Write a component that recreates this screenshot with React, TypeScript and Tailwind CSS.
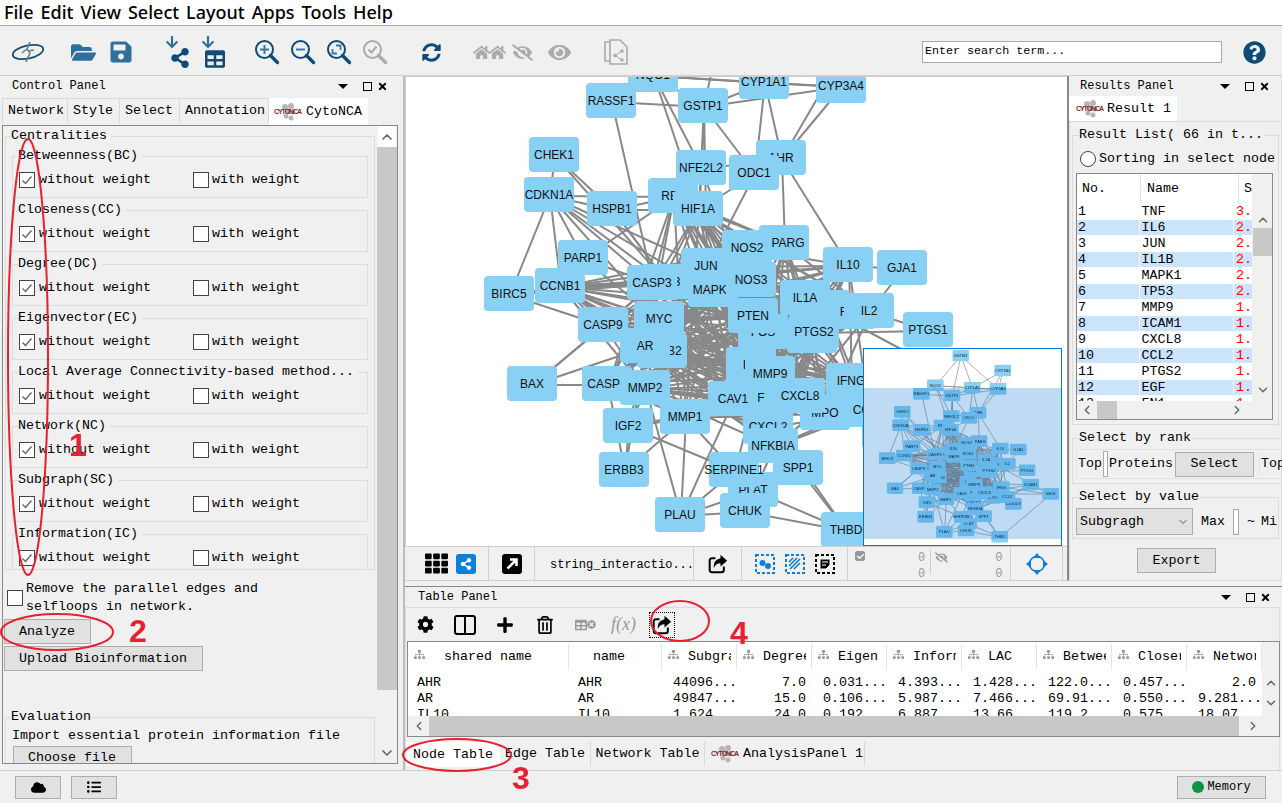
import { FaCloud, FaCog, FaEye, FaEyeSlash, FaFolderOpen, FaHome, FaListUl, FaPlus, FaQuestionCircle, FaSave, FaShareAlt, FaSitemap, FaSyncAlt, FaTh, FaTable, FaRegTrashAlt, FaArrowDown, FaTimes, FaTimesCircle, FaCheck } from "react-icons/fa";
import { ChevronUp, ChevronDown, ChevronLeft, ChevronRight } from "lucide-react";
import type { ReactNode } from "react";

// page coordinates of every node, later entries paint over earlier ones
const nodes: [string, number, number][] = [
  ["GSTM1", 729, -14], ["CYP1B1", 855, 31],
  ["NQO1", 653, 75], ["CYP1A1", 764, 82], ["CYP3A4", 841, 86], ["RASSF1", 611, 101], ["GSTP1", 703, 106],
  ["CHEK1", 554, 155], ["AHR", 781, 158], ["NFE2L2", 701, 168], ["ODC1", 754, 173], ["CDKN1A", 549, 195],
  ["RB1", 673, 196], ["HSPB1", 612, 209], ["HIF1A", 698, 209], ["PARP1", 583, 258], ["PPARG", 784, 243],
  ["NOS2", 747, 248], ["IL10", 848, 265], ["GJA1", 902, 268], ["CCNB1", 560, 286], ["BIRC5", 509, 294],
  ["TP53", 666, 282], ["CASP3", 652, 283], ["MAPK1", 713, 290], ["JUN", 706, 266], ["NOS3", 751, 280],
  ["ICAM1", 825, 308], ["IL1A", 805, 298], ["FN1", 851, 312], ["IL2", 869, 311], ["PTGS1", 928, 330],
  ["VEGFA", 812, 336], ["FOS", 763, 332], ["PTEN", 753, 316], ["PTGS2", 814, 332], ["ERBB2", 662, 351], ["MYC", 659, 319],
  ["CASP9", 603, 325], ["AR", 645, 346], ["IL1B", 751, 372], ["IL6", 751, 365], ["SELE", 999, 401], ["VCAM1", 939, 373],
  ["CD40LG", 887, 431], ["MMP9", 770, 374], ["IFNG", 851, 381], ["BAX", 532, 384],
  ["CASP8", 607, 384], ["IGF2", 628, 426], ["MMP2", 645, 388], ["CXCL2", 768, 427], ["TNF", 753, 398], ["CAV1", 733, 399],
  ["CCL2", 868, 410], ["MPO", 825, 413], ["CXCL8", 800, 396], ["MMP1", 685, 417],
  ["NFKBIA", 773, 446], ["ERBB3", 624, 470], ["PLAT", 753, 490], ["SERPINE1", 734, 470], ["SPP1", 798, 468],
  ["CHUK", 745, 511], ["PLAU", 680, 515], ["THBD", 846, 530],
];

const core = ["CASP3", "TP53", "MAPK1", "JUN", "NOS3", "PTEN", "IL1A", "ICAM1", "IL2", "MYC", "AR", "ERBB2", "FOS", "PTGS2", "IL6", "IL1B", "MMP9", "MMP2", "CAV1", "TNF", "CXCL8", "IFNG", "MPO", "CCL2", "MMP1", "CXCL2", "HIF1A", "NOS2", "PPARG", "IL10", "RB1", "CCNB1", "CASP8", "CASP9", "VEGFA", "NFKBIA"];

const extraEdges = "GSTM1-GSTP1 GSTM1-CYP1A1 GSTM1-NQO1 GSTM1-CYP3A4 CYP1B1-CYP1A1 CYP1B1-CYP3A4 CYP1B1-AHR NQO1-CYP1A1 NQO1-CYP3A4 NQO1-GSTP1 NQO1-RASSF1 NQO1-NFE2L2 NQO1-HIF1A CYP1A1-CYP3A4 CYP1A1-GSTP1 CYP1A1-AHR CYP1A1-ODC1 CYP3A4-GSTP1 CYP3A4-AHR RASSF1-GSTP1 RASSF1-CASP3 GSTP1-NFE2L2 GSTP1-ODC1 GSTP1-HIF1A GSTP1-JUN CHEK1-CDKN1A CHEK1-HSPB1 CHEK1-TP53 AHR-PPARG AHR-IL10 AHR-NFE2L2 NFE2L2-HIF1A NFE2L2-PTEN ODC1-HIF1A ODC1-JUN CDKN1A-HSPB1 CDKN1A-RB1 CDKN1A-BIRC5 CDKN1A-CASP3 CDKN1A-TP53 CDKN1A-MYC CDKN1A-PTEN CDKN1A-CCNB1 CDKN1A-PARP1 CDKN1A-JUN HSPB1-RB1 HSPB1-HIF1A HSPB1-TP53 HSPB1-TNF PARP1-CASP3 PARP1-RB1 PARP1-TNF BIRC5-CCNB1 BIRC5-CASP3 BIRC5-CASP9 CCNB1-CASP3 CASP9-BAX CASP9-CASP3 BAX-CASP8 BAX-AR BAX-CASP3 GJA1-IL10 GJA1-IL2 PTGS1-PTGS2 PTGS1-IL2 IGF2-MMP2 IGF2-ERBB3 IGF2-MMP1 IGF2-AR IGF2-TNF ERBB3-MMP1 ERBB3-AR ERBB3-CASP8 PLAU-MMP1 PLAU-SERPINE1 PLAU-CAV1 PLAU-PLAT PLAU-MMP2 PLAU-CHUK CHUK-NFKBIA CHUK-THBD SPP1-THBD SPP1-MMP9 SPP1-IL6 PLAT-THBD PLAT-SERPINE1 SERPINE1-MMP1 SERPINE1-IGF2 SERPINE1-TNF SERPINE1-NFKBIA NFKBIA-IFNG NFKBIA-VCAM1 SELE-VCAM1 SELE-ICAM1 SELE-THBD SELE-IL6 SELE-TNF VCAM1-IL6 VCAM1-TNF VCAM1-CCL2 CD40LG-IL6 CD40LG-TNF THBD-TNF"
  .split(" ")
  .map((e) => e.split("-"));

const pos = Object.fromEntries(nodes.map(([n, x, y]) => [n, [x - 405, y - 76]]));
const pairs: string[][] = [...extraEdges];
core.forEach((a, i) =>
  core.forEach((b, j) => {
    if (j > i && (i + j) % 2 === 0) pairs.push([a, b]);
  }),
);

function Network() {
  return (
    <div className="absolute left-0 top-0 h-[470px] w-[662px]">
      <svg width={662} height={470} className="absolute left-0 top-0 overflow-visible">
        {pairs.map(([a, b], i) => (
          <line key={i} x1={pos[a][0]} y1={pos[a][1]} x2={pos[b][0]} y2={pos[b][1]} stroke="#888888" strokeWidth={a === "CCNB1" && b === "CASP3" ? 5 : 2} />
        ))}
      </svg>
      {nodes.map(([name, x, y]) => (
        <div
          key={name}
          className="absolute flex h-[35px] w-[50px] items-center justify-center whitespace-nowrap rounded-[4px] bg-[#89d0f5] font-['Liberation_Sans',sans-serif] text-[12px] text-[#111]"
          style={{ left: x - 405 - 26, top: y - 76 - 19 }}
        >
          {name}
        </div>
      ))}
    </div>
  );
}

function Caret() {
  return <span className="h-0 w-0 border-x-[5px] border-t-[5px] border-x-transparent border-t-black" />;
}

function PanelHeader({ title, className }: { title: string; className: string }) {
  return (
    <div className={"flex h-[20px] shrink-0 items-center " + className}>
      <span className="flex-1 text-[12px]">{title}</span>
      <Caret />
      <span className="ml-[15px] h-[9px] w-[9px] border border-black" />
      <FaTimes className="ml-[5px] text-[11px]" />
    </div>
  );
}

function NcaLogo({ w = 28 }: { w?: number }) {
  return (
    <svg width={w} height={20} viewBox="0 0 28 20" className="shrink-0">
      <g fill="#b9b4b4">
        <circle cx="11" cy="5" r="3" /><circle cx="17" cy="4" r="3" /><circle cx="14" cy="9" r="3" /><circle cx="19" cy="10" r="2.5" />
        <circle cx="12" cy="14" r="2.5" /><circle cx="17" cy="16" r="2.5" />
      </g>
      <text x="0" y="12" fontSize="7" fontWeight="700" fill="#7c2a2a" fontFamily="Liberation Sans" textLength="28">CYTONCA</text>
    </svg>
  );
}

function Check({ on }: { on?: boolean }) {
  return (
    <span className="flex h-[16px] w-[16px] shrink-0 items-center justify-center border border-[#444] bg-white">
      {on && (
        <svg width="12" height="12" viewBox="0 0 12 12"><path d="M1.5 6.5 L4.5 9.5 L10.5 2.5" fill="none" stroke="#666" strokeWidth="1.4" /></svg>
      )}
    </span>
  );
}

function Group({ title, last }: { title: string; last?: boolean }) {
  return (
    <fieldset className={"mx-[6px] h-[50px] shrink-0 border border-[#dcdcdc] pl-[6px] " + (last ? "mb-[-12px]" : "mb-[4px]")}>
      <legend className="ml-[-1px] whitespace-nowrap pr-[4px] leading-[16px]">{title}</legend>
      <div className="mt-[6px] flex items-center">
        <div className="flex w-[174px] items-center gap-[4px]">
          <Check on />
          <span>without weight</span>
        </div>
        <div className="flex items-center gap-[3px]">
          <Check />
          <span>with weight</span>
        </div>
      </div>
    </fieldset>
  );
}

function Btn({ children, className }: { children: ReactNode; className: string }) {
  return <div className={"flex shrink-0 items-center border border-[#adadad] bg-[#e1e1e1] " + className}>{children}</div>;
}

function Magnifier({ kind, color = "#0f4c75" }: { kind: "plus" | "minus" | "fit" | "check"; color?: string }) {
  return (
    <svg width="26" height="26" viewBox="0 0 26 26">
      <circle cx="10.5" cy="10.5" r="8.5" fill="none" stroke={color} strokeWidth="2" />
      <path d="M16.5 16.5 L23.5 23.5" stroke={color} strokeWidth="3.4" strokeLinecap="round" />
      {kind === "plus" && <path d="M6 10.5 H15 M10.5 6 V15" stroke="#3a77a4" strokeWidth="2" />}
      {kind === "minus" && <path d="M6 10.5 H15" stroke="#3a77a4" strokeWidth="2" />}
      {kind === "fit" && <path d="M6.5 10 V14.5 H11 M10 6.5 H14.5 V11" fill="none" stroke="#3a77a4" strokeWidth="1.8" />}
      {kind === "check" && <path d="M6.5 10.5 L9.5 13.5 L14.5 7.5" fill="none" stroke={color} strokeWidth="2" />}
    </svg>
  );
}

function ShareBox({ size = 24 }: { size?: number }) {
  return (
    <svg width={size} height={size} viewBox="0 0 24 24">
      <path d="M9 5 H5 Q2 5 2 8 V19 Q2 22 5 22 H16 Q19 22 19 19 V15" fill="none" stroke="#000" strokeWidth="2.4" />
      <path d="M15 1 L23 8 L15 15 V11 Q9 11 7 17 Q6 7 15 5 Z" fill="#000" />
    </svg>
  );
}

function DashedBox({ color, children }: { color: string; children: ReactNode }) {
  return (
    <svg width="20" height="20" viewBox="0 0 20 20">
      <rect x="1" y="1" width="18" height="18" fill="none" stroke={color} strokeWidth="2" strokeDasharray="3 2" />
      {children}
    </svg>
  );
}

function Toolbar() {
  return (
    <div className="flex h-[50px] shrink-0 items-center border-b border-[#d0d0d0] bg-[#f0f0f0] pl-[11px] pt-[3px] text-[#0f4c75]">
      <svg width="34" height="26" viewBox="0 0 34 26" className="shrink-0">
        <ellipse cx="17" cy="13" rx="15.5" ry="6.5" transform="rotate(-12 17 13)" fill="none" stroke="#1d4f70" strokeWidth="1.8" />
        <path d="M19 3 L16 10 L19 14 L15 23 M16 10 L11 14 M17 12 L23 11" fill="none" stroke="#6a7f8c" strokeWidth="1.6" />
      </svg>
      <FaFolderOpen className="ml-[26px] text-[25px] text-[#2f6f9c]" />
      <FaSave className="ml-[13px] text-[24px] text-[#2f6f9c]" />
      <div className="relative ml-[32px] h-[34px] w-[26px]">
        <FaArrowDown className="absolute left-0 top-0 text-[14px] text-[#2f6f9c]" />
        <FaShareAlt className="absolute left-[5px] top-[13px] text-[20px] text-[#0f4c75]" />
      </div>
      <div className="relative ml-[10px] h-[34px] w-[26px]">
        <FaArrowDown className="absolute left-0 top-0 text-[14px] text-[#2f6f9c]" />
        <FaTable className="absolute left-[4px] top-[14px] text-[20px] text-[#0f4c75]" />
      </div>
      <div className="ml-[27px] flex gap-[10px]">
        <Magnifier kind="plus" />
        <Magnifier kind="minus" />
        <Magnifier kind="fit" />
        <Magnifier kind="check" color="#ababab" />
      </div>
      <FaSyncAlt className="ml-[34px] text-[19px] text-[#0f4c75]" />
      <div className="ml-[32px] flex text-[#ababab]">
        <FaHome className="text-[17px]" />
        <FaHome className="-ml-[1px] text-[17px]" />
      </div>
      <FaEyeSlash className="ml-[6px] text-[21px] text-[#ababab]" />
      <FaEye className="ml-[15px] text-[23px] text-[#ababab]" />
      <svg width="26" height="28" viewBox="0 0 26 28" className="ml-[32px] shrink-0">
        <path d="M2 4 H11 V23 H2 Z" fill="none" stroke="#ababab" strokeWidth="1.6" />
        <path d="M7 2 H17 L24 9 V26 H7 Z" fill="#f0f0f0" stroke="#ababab" strokeWidth="1.6" />
        <circle cx="19" cy="13" r="1.8" fill="#ababab" /><circle cx="19" cy="22" r="1.8" fill="#ababab" /><circle cx="12" cy="17.5" r="1.8" fill="#ababab" />
        <path d="M19 13 L12 17.5 L19 22" fill="none" stroke="#ababab" />
      </svg>
      <div className="ml-[293px] flex h-[22px] w-[300px] shrink-0 items-center border border-[#aaa] bg-white pl-[2px] text-[11.7px] text-black">Enter search term...</div>
      <FaQuestionCircle className="ml-[21px] shrink-0 text-[23px] text-[#0f4c75]" />
    </div>
  );
}

function ControlPanel() {
  const titles = ["Betweenness(BC)", "Closeness(CC)", "Degree(DC)", "Eigenvector(EC)", "Local Average Connectivity-based method...", "Network(NC)", "Subgraph(SC)", "Information(IC)"];
  return (
    <div className="flex w-[405px] shrink-0 flex-col border-r-2 border-[#bdbdbd]">
      <PanelHeader title="Control Panel" className="pl-[12px] pr-[15px]" />
      <div className="flex h-[29px] shrink-0 items-start pl-[2px] pt-[2px]">
        <div className="flex h-[25px] w-[66px] items-center border border-b-0 border-[#d9d9d9] pl-[5px]">Network</div>
        <div className="flex h-[25px] w-[52px] items-center border border-l-0 border-b-0 border-[#d9d9d9] pl-[5px]">Style</div>
        <div className="flex h-[25px] w-[60px] items-center border border-l-0 border-b-0 border-[#d9d9d9] pl-[5px]">Select</div>
        <div className="flex h-[25px] w-[89px] items-center border border-l-0 border-b-0 border-[#d9d9d9] pl-[5px]">Annotation</div>
        <div className="flex h-[27px] w-[99px] items-center gap-[4px] bg-white pl-[5px]">
          <NcaLogo />
          CytoNCA
        </div>
      </div>
      <div className="ml-[2px] flex h-[639px] w-[396px] border border-[#888]">
        <div className="flex w-[374px] shrink-0 flex-col overflow-hidden">
          <fieldset className="mx-[2px] mt-[2px] h-[442px] shrink-0 overflow-hidden border border-[#dcdcdc]">
            <legend className="ml-[5px] pr-[4px] leading-[16px]">Centralities</legend>
            <div className="mt-[4px] flex flex-col">
              {titles.map((t, i) => (
                <Group key={t} title={t} last={i === titles.length - 1} />
              ))}
            </div>
          </fieldset>
          <div className="ml-[4px] mt-[10px] flex items-center gap-[3px]">
            <Check />
            <span className="leading-[18px]">Remove the parallel edges and<br />selfloops in network.</span>
          </div>
          <Btn className="ml-[1px] mt-[3px] h-[25px] w-[87px] pl-[14px]">Analyze</Btn>
          <Btn className="ml-[1px] mt-[2px] h-[25px] w-[199px] pl-[14px]">Upload Bioinformation</Btn>
          <fieldset className="mx-[2px] mt-[38px] h-[90px] shrink-0 border border-[#dcdcdc]">
            <legend className="ml-[5px] pr-[1px] leading-[16px]">Evaluation</legend>
            <div className="ml-[6px] mt-[3px] whitespace-nowrap leading-[16px]">Import essential protein information file</div>
            <Btn className="ml-[7px] mt-[2px] h-[24px] w-[119px] pl-[14px]">Choose file</Btn>
          </fieldset>
        </div>
        <div className="flex w-[20px] shrink-0 flex-col items-center text-[#666]">
          <div className="flex h-[21px] items-center bg-white px-[1px]"><ChevronUp size={16} strokeWidth={2.5} /></div>
          <div className="h-[543px] w-full bg-[#c8c8c8]" />
          <div className="flex flex-1 items-end pb-[2px]"><ChevronDown size={16} strokeWidth={2.5} /></div>
        </div>
      </div>
    </div>
  );
}

function ResultsPanel() {
  const rows = [["1", "TNF", "3."], ["2", "IL6", "2."], ["3", "JUN", "2."], ["4", "IL1B", "2."], ["5", "MAPK1", "2."], ["6", "TP53", "2."], ["7", "MMP9", "1."], ["8", "ICAM1", "1."], ["9", "CXCL8", "1."], ["10", "CCL2", "1."], ["11", "PTGS2", "1."], ["12", "EGF", "1."], ["13", "FN1", "1."]];
  return (
    <div className="flex h-[505px] w-[215px] shrink-0 flex-col border-l-2 border-r border-b border-[#888] border-r-[#dcdcdc] border-b-[#dcdcdc]">
      <PanelHeader title="Results Panel" className="pl-[11px] pr-[11px]" />
      <div className="flex h-[25px] w-[108px] shrink-0 items-center gap-[3px] bg-white pl-[7px]">
        <NcaLogo />
        Result 1
      </div>
      <div className="flex flex-1 flex-col border-l border-t border-[#dcdcdc] pl-[2px] pr-[2px]">
        <fieldset className="mt-[5px] h-[298px] shrink-0 overflow-hidden border border-[#dcdcdc] pl-[3px] pr-[3px]">
          <legend className="ml-[3px] whitespace-nowrap pr-[2px] leading-[16px]">Result List( 66 in t...</legend>
          <div className="mt-[4px] flex h-[24px] items-center gap-[3px] overflow-hidden whitespace-nowrap">
            <span className="ml-[4px] h-[16px] w-[16px] shrink-0 rounded-full border border-[#444] bg-white" />
            Sorting in select node
          </div>
          <div className="mt-[2px] h-[247px] w-[197px] border border-[#888]">
            <div className="flex h-[227px]">
              <div className="w-[175px] overflow-hidden bg-white">
                <div className="flex h-[29px] items-center">
                  <span className="w-[64px] border-r border-[#e5e5e5] pl-[5px] leading-[29px]">No.</span>
                  <span className="w-[98px] border-r border-[#e5e5e5] pl-[6px] leading-[29px]">Name</span>
                  <span className="pl-[5px]">S</span>
                </div>
                {rows.map((r, i) => (
                  <div key={r[0]} className="flex h-[16px] items-center gap-[1px] leading-[16px]">
                    <span className={"h-[15px] w-[64px] pl-[1px] " + (i % 2 ? "bg-[#cce4fb]" : "")}>{r[0]}</span>
                    <span className={"h-[15px] w-[97px] pl-[2px] " + (i % 2 ? "bg-[#cce4fb]" : "")}>{r[1]}</span>
                    <span className={"h-[15px] flex-1 pl-[2px] text-[#ff0000] " + (i % 2 ? "bg-[#cce4fb]" : "")}>{r[2]}</span>
                  </div>
                ))}
              </div>
              <div className="flex flex-1 flex-col items-center pl-[1px] pt-[39px] text-[#666]">
                <ChevronUp size={14} strokeWidth={2.5} />
                <div className="mt-[1px] h-[28px] w-[19px] bg-[#c8c8c8]" />
                <div className="mt-[127px]"><ChevronDown size={14} strokeWidth={2.5} /></div>
              </div>
            </div>
            <div className="flex h-[18px] w-[175px] items-center pl-[3px] text-[#666]">
              <ChevronLeft size={14} strokeWidth={2.5} />
              <div className="ml-[3px] h-[18px] w-[20px] bg-[#c8c8c8]" />
              <div className="ml-[113px]"><ChevronRight size={14} strokeWidth={2.5} /></div>
            </div>
          </div>
        </fieldset>
        <fieldset className="mt-[5px] h-[54px] shrink-0 overflow-hidden border border-[#dcdcdc] pl-[3px]">
          <legend className="ml-[3px] pr-[2px] leading-[16px]">Select by rank</legend>
          <div className="mt-[3px] flex h-[30px] items-center whitespace-nowrap border border-[#e2e2e2]">
            <span className="pl-[1px]">Top</span>
            <span className="mx-[1px] h-[26px] w-[5px] shrink-0 border border-[#aaa] bg-white" />
            <span>Proteins</span>
            <Btn className="ml-[2px] h-[25px] w-[79px] justify-center">Select</Btn>
            <span className="ml-[5px] border-l border-[#e2e2e2] pl-[1px]">Top</span>
          </div>
        </fieldset>
        <fieldset className="mt-[5px] h-[50px] shrink-0 overflow-hidden border border-[#dcdcdc] pl-[3px]">
          <legend className="ml-[3px] pr-[2px] leading-[16px]">Select by value</legend>
          <div className="mt-[3px] flex h-[27px] items-center whitespace-nowrap">
            <div className="flex h-[27px] w-[117px] shrink-0 items-center justify-between border border-[#adadad] bg-[#e1e1e1] pl-[3px] pr-[3px]">
              Subgragh
              <ChevronDown size={12} className="text-[#555]" />
            </div>
            <span className="ml-[8px]">Max</span>
            <span className="ml-[8px] h-[26px] w-[6px] shrink-0 border border-[#aaa] bg-white" />
            <span className="ml-[8px]">~</span>
            <span className="ml-[6px]">Mi</span>
          </div>
        </fieldset>
        <Btn className="ml-[65px] mt-[9px] h-[25px] w-[79px] justify-center">Export</Btn>
      </div>
    </div>
  );
}

function NetworkView() {
  return (
    <div className="flex h-[506px] w-[662px] shrink-0 flex-col">
      <div className="relative h-[470px] shrink-0 overflow-hidden border-l border-t border-[#ccc] bg-white">
        <Network />
        <div className="absolute bottom-[0px] right-[5px] h-[198px] w-[199px] overflow-hidden border border-[#0078d7] bg-white">
          <div className="absolute left-[-11px] top-[37px] origin-top-left scale-[0.3333]">
            <Network />
          </div>
          <div className="absolute bottom-[6px] left-0 right-0 top-[39px] bg-[rgba(0,110,210,0.25)]" />
        </div>
      </div>
      <div className="flex h-[35px] shrink-0 items-center border-t border-b border-[#d0d0d0] text-[12px]">
        <div className="flex h-full w-[84px] items-center border-r border-[#d0d0d0] pl-[20px]">
          <FaTh className="text-[23px]" />
          <span className="ml-[8px] flex h-[20px] w-[20px] items-center justify-center rounded-[3px] bg-[#0b7fdc] text-[12px] text-white"><FaShareAlt /></span>
        </div>
        <div className="flex h-full w-[46px] items-center justify-center border-r border-[#d0d0d0]">
          <svg width="20" height="20" viewBox="0 0 20 20"><rect width="20" height="20" rx="3" fill="#000" /><path d="M5.5 14.5 L13 7 M8 5.5 H14.5 V12" fill="none" stroke="#fff" strokeWidth="2.6" /></svg>
        </div>
        <div className="flex h-full w-[159px] items-center border-r border-[#d0d0d0] pl-[15px] pt-[3px]">string_interactio...</div>
        <div className="flex h-full w-[48px] items-center justify-center border-r border-[#d0d0d0]"><ShareBox size={20} /></div>
        <div className="flex h-full w-[106px] items-center justify-center gap-[10px] border-r border-[#d0d0d0]">
          <DashedBox color="#0b7fdc"><circle cx="7.5" cy="9" r="3" fill="#0b7fdc" /><circle cx="13" cy="12" r="3" fill="#0b7fdc" /></DashedBox>
          <DashedBox color="#0b7fdc"><path d="M4 8 L8 4 M4 12 L12 4 M5 15 L15 5 M9 15 L15 9" stroke="#0b7fdc" strokeWidth="1.6" /></DashedBox>
          <DashedBox color="#000"><path d="M5 5 H15 V11 L11 15 H5 Z M7 8 H13 M7 11 H11" fill="#000" stroke="#fff" strokeWidth="1" /></DashedBox>
        </div>
        <div className="flex h-full w-[163px] border-r border-[#d0d0d0] text-[#999]">
          <span className="ml-[7px] mt-[4px] flex h-[10px] w-[10px] items-center justify-center rounded-[2px] bg-[#999] text-[7px] text-white"><FaCheck /></span>
          <span className="ml-[53px] mt-[3px] leading-[16px]">0<br />0</span>
          <span className="ml-[5px] mt-[3px] h-[24px] border-l border-[#ccc]" />
          <FaEyeSlash className="ml-[4px] mt-[4px] text-[13px]" />
          <span className="ml-[47px] mt-[3px] leading-[16px]">0<br />0</span>
        </div>
        <div className="flex h-full w-[52px] items-center justify-center border-r border-[#d0d0d0]">
          <svg width="22" height="22" viewBox="0 0 22 22" fill="#0b7fdc">
            <circle cx="11" cy="11" r="7.5" fill="none" stroke="#0b7fdc" strokeWidth="1.6" />
            <path d="M11 0 L15 5 H7 Z M11 22 L7 17 H15 Z M0 11 L5 7 V15 Z M22 11 L17 15 V7 Z" />
          </svg>
        </div>
      </div>
    </div>
  );
}

function TablePanel() {
  const cols = [["shared name", 161, false], ["name", 93, false], ["Subgra", 75, true], ["Degree", 75, true], ["Eigen", 75, true], ["Inform", 75, true], ["LAC", 75, true], ["Betwee", 75, true], ["Closer", 75, true], ["Networ", 75, true]] as [string, number, boolean][];
  const data = [
    ["AHR", "AHR", "44096...", "7.0", "0.031...", "4.393...", "1.428...", "122.0...", "0.457...", "2.0"],
    ["AR", "AR", "49847...", "15.0", "0.106...", "5.987...", "7.466...", "69.91...", "0.550...", "9.281..."],
    ["IL10", "IL10", "1.624...", "24.0", "0.192...", "6.887...", "13.66...", "119.2...", "0.575...", "18.07..."],
  ];
  return (
    <div className="mt-[4px] flex h-[184px] shrink-0 flex-col border-t border-[#888]">
      <PanelHeader title="Table Panel" className="pl-[13px] pr-[11px]" />
      <div className="mr-[2px] flex flex-1 flex-col border-t border-l border-r border-[#dcdcdc]">
        <div className="flex h-[33px] shrink-0 items-center pl-[11px]">
          <FaCog className="text-[17px]" />
          <svg width="22" height="20" viewBox="0 0 22 20" className="ml-[20px]"><rect x="1" y="1" width="20" height="18" rx="2" fill="none" stroke="#000" strokeWidth="2" /><path d="M11 1 V19" stroke="#000" strokeWidth="2" /></svg>
          <FaPlus className="ml-[20px] text-[18px]" />
          <FaRegTrashAlt className="ml-[22px] text-[18px]" />
          <div className="ml-[21px] flex items-center text-[#999]">
            <FaTable className="text-[12px]" />
            <FaTimesCircle className="text-[9px]" />
          </div>
          <span className="ml-[15px] font-['Liberation_Serif',serif] text-[18px] italic text-[#999]">f(x)</span>
          <div className="ml-[13px] flex h-[26px] w-[26px] items-center justify-center border border-dotted border-black"><ShareBox size={20} /></div>
        </div>
        <div className="ml-[1px] flex h-[96px] w-[873px] shrink-0 flex-col border border-[#888]">
          <div className="flex h-[74px] overflow-hidden">
            <div className="w-[854px] overflow-hidden bg-white">
              <div className="flex h-[33px] items-start pt-[2px]">
                {cols.map(([c, w, trim], i) => (
                  <div key={c} style={{ width: w }} className="flex h-[26px] shrink-0 items-center whitespace-nowrap border-r border-[#e5e5e5] pl-[6px] pr-[5px] leading-[26px]">
                    {i !== 1 && <FaSitemap className="mb-[6px] mr-[9px] shrink-0 text-[11px] text-[#999]" />}
                    <span className={"overflow-hidden " + (trim ? "" : i === 0 ? "ml-[10px]" : "ml-[18px]")}>{c}</span>
                  </div>
                ))}
              </div>
              {data.map((row) => (
                <div key={row[0]} className="flex h-[16px] items-center leading-[16px]">
                  {row.map((v, i) => (
                    <div key={i} style={{ width: cols[i][1] }} className={"shrink-0 whitespace-nowrap " + (i < 2 ? "pl-[9px]" : i === 3 || v === "2.0" ? "pr-[6px] text-right" : "pl-[11px]")}>{v}</div>
                  ))}
                </div>
              ))}
            </div>
            <div className="flex flex-1 flex-col items-center pt-[34px] text-[#666]">
              <ChevronUp size={14} strokeWidth={2.5} />
              <ChevronDown size={14} strokeWidth={2.5} className="mt-[6px]" />
            </div>
          </div>
          <div className="flex h-[20px] flex-1 items-center text-[#666]">
            <div className="flex w-[21px] justify-center"><ChevronLeft size={14} strokeWidth={2.5} /></div>
            <div className="h-full w-[810px] bg-[#c8c8c8]" />
            <div className="flex flex-1 pl-[7px]"><ChevronRight size={14} strokeWidth={2.5} /></div>
          </div>
        </div>
        <div className="mt-[5px] flex h-[25px] items-start">
          <div className="flex h-[25px] w-[94px] items-center justify-center bg-white">Node Table</div>
          <div className="flex h-[24px] w-[91px] items-center justify-center border-r border-[#d9d9d9]">Edge Table</div>
          <div className="flex h-[24px] w-[114px] items-center justify-center border-r border-[#d9d9d9]">Network Table</div>
          <div className="flex h-[24px] w-[160px] items-center gap-[4px] border-r border-[#d9d9d9] pl-[6px]">
            <NcaLogo />
            AnalysisPanel 1
          </div>
        </div>
      </div>
    </div>
  );
}

export default function App() {
  return (
    <div className="relative flex h-[803px] w-[1282px] flex-col overflow-hidden bg-[#f0f0f0] font-['Liberation_Mono',monospace] text-[13.33px] text-black">
      <div className="flex h-[26px] shrink-0 items-center gap-[7px] border-b border-[#aaa] bg-white pl-[4px] font-['Noto_Sans',sans-serif] text-[18px] font-medium">
        {["File", "Edit", "View", "Select", "Layout", "Apps", "Tools", "Help"].map((m) => (
          <span key={m}>{m}</span>
        ))}
      </div>
      <Toolbar />
      <div className="flex h-[694px] shrink-0">
        <ControlPanel />
        <div className="flex w-[877px] shrink-0 flex-col">
          <div className="flex h-[506px] shrink-0">
            <NetworkView />
            <ResultsPanel />
          </div>
          <TablePanel />
        </div>
      </div>
      <div className="flex flex-1 items-center border-t border-[#d0d0d0] pl-[15px] pr-[16px]">
        <Btn className="h-[23px] w-[46px] justify-center"><FaCloud className="text-[15px]" /></Btn>
        <Btn className="ml-[10px] h-[23px] w-[46px] justify-center"><FaListUl className="text-[14px]" /></Btn>
        <Btn className="ml-auto h-[23px] w-[89px] justify-center gap-[3px] text-[12px]">
          <span className="h-[12px] w-[12px] rounded-full bg-[#0a9444]" />
          Memory
        </Btn>
      </div>
      <svg width={1282} height={803} className="pointer-events-none absolute left-0 top-0">
        <g fill="none" stroke="#e8202f" strokeWidth="2">
          <ellipse cx="28" cy="357" rx="20" ry="218" />
          <ellipse cx="57" cy="632" rx="56" ry="18" />
          <ellipse cx="457" cy="755" rx="54" ry="16" />
          <ellipse cx="680" cy="621" rx="29" ry="20" />
        </g>
        <g fill="#e8202f" fontFamily="Liberation Sans" fontWeight="700" fontSize="32">
          <text x="69" y="456">1</text>
          <text x="129" y="642">2</text>
          <text x="512" y="789">3</text>
          <text x="730" y="644">4</text>
        </g>
      </svg>
    </div>
  );
}
